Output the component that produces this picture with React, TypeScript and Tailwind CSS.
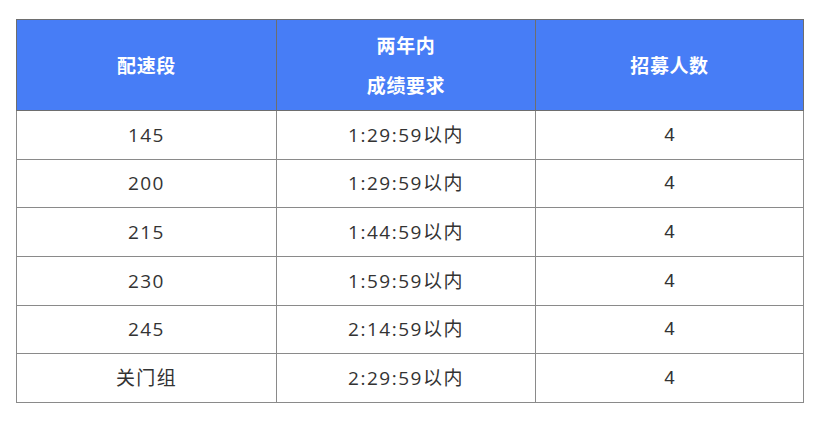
import React from "react";

const rows = [
  ["145", "1:29:59以内", "4"],
  ["200", "1:29:59以内", "4"],
  ["215", "1:44:59以内", "4"],
  ["230", "1:59:59以内", "4"],
  ["245", "2:14:59以内", "4"],
  ["关门组", "2:29:59以内", "4"],
];

const heights = ["h-[49px]", "h-[48px]", "h-[49px]", "h-[49px]", "h-[48px]", "h-[49px]"];

export default function App() {
  return (
    <div className="w-[828px] h-[421px] bg-white pt-[19px] pl-[16px]">
      <table className="border-collapse table-fixed w-[787px]">
        <colgroup>
          <col className="w-[260px]" />
          <col className="w-[259px]" />
          <col className="w-[268px]" />
        </colgroup>
        <thead>
          <tr className="h-[91px] bg-[#477df6] text-white font-bold text-[19px] tracking-[0.6px] [font-family:'Noto_Sans_CJK_SC',sans-serif]">
            <th className="border border-[#6e6e6e] text-center align-middle">配速段</th>
            <th className="border border-[#6e6e6e] text-center align-middle leading-[40px]">
              <div>两年内</div>
              <div>成绩要求</div>
            </th>
            <th className="border border-[#6e6e6e] text-center align-middle">招募人数</th>
          </tr>
        </thead>
        <tbody>
          {rows.map((r, i) => (
            <tr key={i} className={heights[i]}>
              <td className="border border-[#8a8a8a] text-center align-middle text-[19px] text-[#333] tracking-[1.4px] [font-family:'Open_Sans','Noto_Sans_CJK_SC',sans-serif]">
                {r[0]}
              </td>
              <td className="border border-[#8a8a8a] text-center align-middle text-[19px] text-[#333] tracking-[1.5px] [font-family:'Open_Sans','Noto_Sans_CJK_SC',sans-serif]">
                {r[1]}
              </td>
              <td className="border border-[#8a8a8a] text-center align-middle text-[19px] text-[#333] [font-family:'Liberation_Sans',sans-serif]">
                {r[2]}
              </td>
            </tr>
          ))}
        </tbody>
      </table>
    </div>
  );
}
